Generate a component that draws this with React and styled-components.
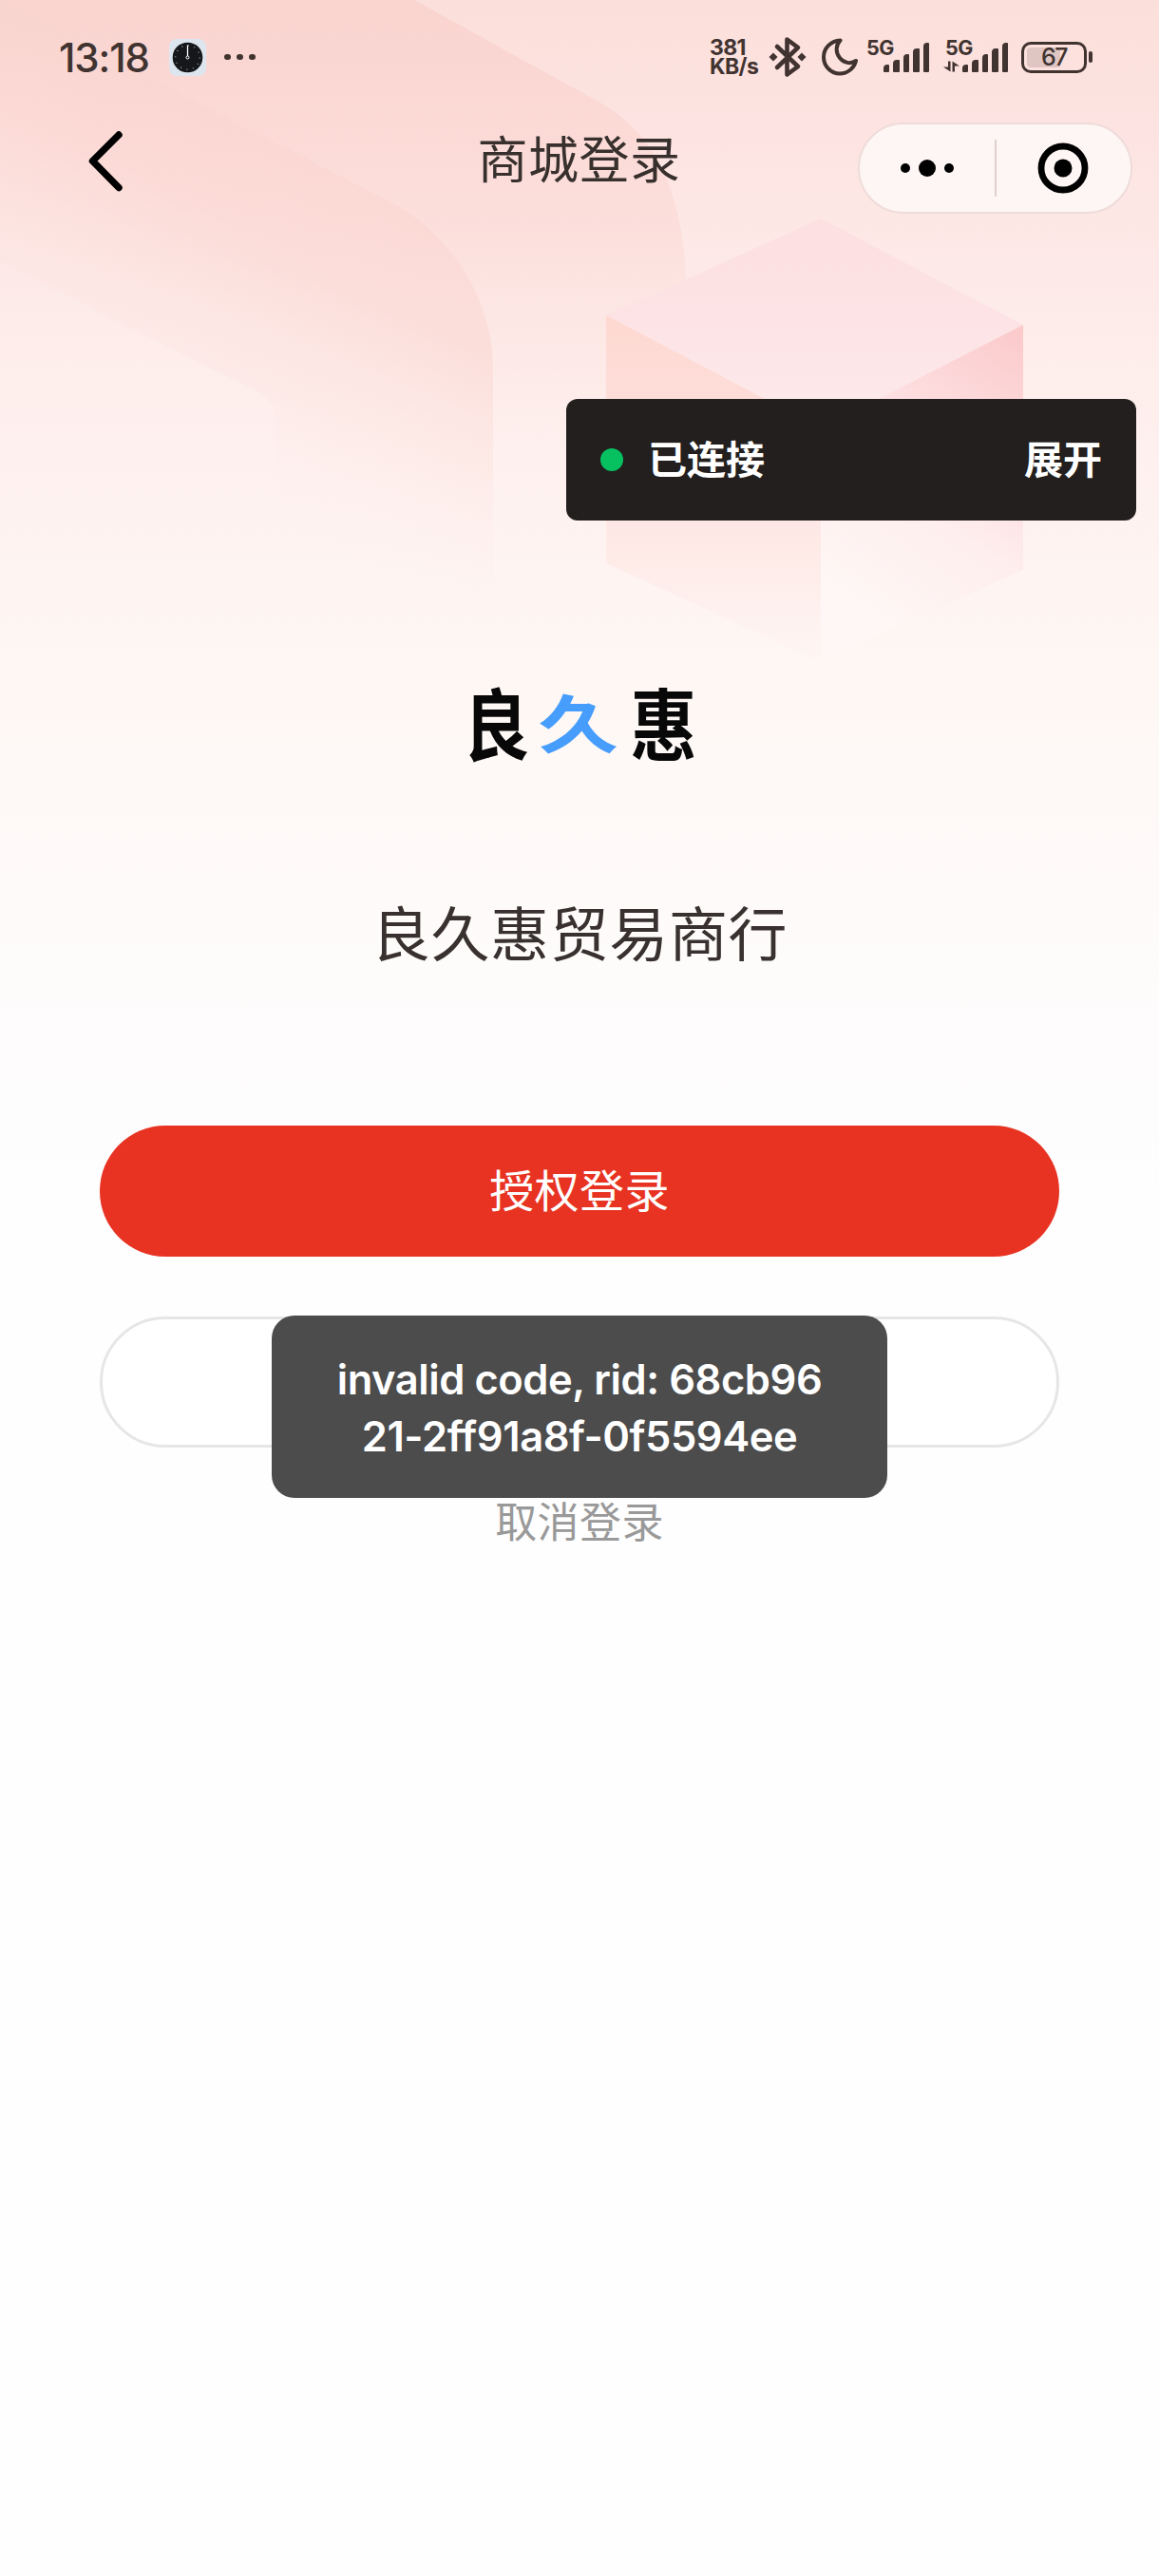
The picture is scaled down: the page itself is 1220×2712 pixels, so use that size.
import styled, { createGlobalStyle } from 'styled-components';

const signalBars = [8, 13, 19, 25, 31];

const App = () => {
  return (
    <>
      <GlobalStyle />
      <Page>
        <Backdrop />

        <StatusBar>
          <Clock>13:18</Clock>
          <ClockIcon />
          <MoreDots>
            <i />
            <i />
            <i />
          </MoreDots>
          <StatusRight>
            <NetSpeed>
              <span>381</span>
              <span>KB/s</span>
            </NetSpeed>
            <BluetoothIcon />
            <MoonIcon />
            <Signal />
            <Signal active />
            <Battery>
              <BatteryBody>
                <span>67</span>
              </BatteryBody>
              <BatteryCap />
            </Battery>
          </StatusRight>
        </StatusBar>

        <NavBar>
          <BackButton aria-label="返回">
            <svg width="42" height="68" viewBox="0 0 42 68" fill="none">
              <path d="M36 6 L8.5 33.5 L36 61.5" stroke="#000" strokeWidth="7.4" strokeLinecap="round" strokeLinejoin="round" />
            </svg>
          </BackButton>
          <NavTitle>商城登录</NavTitle>
          <Capsule>
            <CapsuleHalf>
              <svg width="58" height="20" viewBox="0 0 58 20">
                <circle cx="6" cy="10" r="5" />
                <circle cx="29" cy="10" r="9" />
                <circle cx="52" cy="10" r="5" />
              </svg>
            </CapsuleHalf>
            <CapsuleDivider />
            <CapsuleHalf>
              <svg width="54" height="54" viewBox="0 0 54 54">
                <circle cx="27" cy="27" r="23" fill="none" stroke="#000" strokeWidth="6.8" />
                <circle cx="27" cy="27" r="9.5" />
              </svg>
            </CapsuleHalf>
          </Capsule>
        </NavBar>

        <Content>
          <Logo>
            <LogoChar>良</LogoChar>
            <LogoChar $accent>久</LogoChar>
            <LogoChar>惠</LogoChar>
          </Logo>
          <ShopName>良久惠贸易商行</ShopName>
          <PrimaryButton>授权登录</PrimaryButton>
          <OutlineButton />
          <CancelLink>取消登录</CancelLink>
        </Content>

        <DebugPanel>
          <StatusDot />
          <PanelText>已连接</PanelText>
          <Expand>展开</Expand>
        </DebugPanel>

        <Toast>
          invalid code, rid: 68cb96
          <br />
          21-2ff91a8f-0f5594ee
        </Toast>
      </Page>
    </>
  );
};

const Backdrop = () => (
  <BackdropSvg width="1220" height="1260" viewBox="0 0 1220 1260">
    <defs>
      <linearGradient id="base" x1="0" y1="0" x2="0" y2="1">
        <stop offset="0" stopColor="#fbdfda" />
        <stop offset="0.12" stopColor="#fde4e2" />
        <stop offset="0.25" stopColor="#fdebe9" />
        <stop offset="0.4" stopColor="#fef1ef" />
        <stop offset="0.56" stopColor="#fef7f4" />
        <stop offset="0.8" stopColor="#fefbfb" />
        <stop offset="1" stopColor="#fefefe" />
      </linearGradient>
      <linearGradient id="band" gradientUnits="userSpaceOnUse" x1="450" y1="100" x2="230" y2="520">
        <stop offset="0" stopColor="#f7c6c0" stopOpacity="0.5" />
        <stop offset="0.45" stopColor="#f9cbc5" stopOpacity="0.42" />
        <stop offset="0.7" stopColor="#fad6cf" stopOpacity="0.2" />
        <stop offset="0.88" stopColor="#fbdcd6" stopOpacity="0.04" />
        <stop offset="1" stopColor="#fbe0da" stopOpacity="0" />
      </linearGradient>
      <linearGradient id="bandBack" gradientUnits="userSpaceOnUse" x1="0" y1="0" x2="0" y2="480">
        <stop offset="0" stopColor="#f8c8c4" stopOpacity="0.5" />
        <stop offset="0.5" stopColor="#fad2cc" stopOpacity="0.4" />
        <stop offset="1" stopColor="#fbe0da" stopOpacity="0" />
      </linearGradient>
      <linearGradient id="cubeTop" x1="0" y1="0" x2="0" y2="1">
        <stop offset="0" stopColor="#fde0e0" />
        <stop offset="0.5" stopColor="#fde3e5" />
        <stop offset="1" stopColor="#fdebeb" />
      </linearGradient>
      <linearGradient id="cubeLeft" x1="0" y1="0" x2="0" y2="1">
        <stop offset="0" stopColor="#fed8d1" />
        <stop offset="0.35" stopColor="#fddfdc" />
        <stop offset="0.7" stopColor="#feebe8" />
        <stop offset="1" stopColor="#fef6f4" />
      </linearGradient>
      <linearGradient id="cubeRight" x1="1" y1="0" x2="0.6" y2="1">
        <stop offset="0" stopColor="#fbc9ca" />
        <stop offset="0.35" stopColor="#fddcde" />
        <stop offset="0.65" stopColor="#feeeee" />
        <stop offset="1" stopColor="#fef7f5" />
      </linearGradient>
    </defs>
    <rect width="1220" height="1260" fill="url(#base)" />
    <path d="M0 0 H436 L630 107 C688 139 718 200 722 290 V480 H519 V390 C519 310 470 243 412 213 L0 0Z" fill="url(#bandBack)" />
    <path d="M0 0 L412 213 C470 243 519 310 519 390 V680 H290 V445 C290 425 284 420 266 410 L0 276Z" fill="url(#band)" />
    <path d="M864 230 L1077 342 L864 451 L638 332Z" fill="url(#cubeTop)" />
    <path d="M638 332 L864 451 V697 L638 593Z" fill="url(#cubeLeft)" />
    <path d="M1077 342 L864 451 V697 L1077 600Z" fill="url(#cubeRight)" />
  </BackdropSvg>
);

const ClockIcon = () => (
  <svg width="39" height="39" viewBox="0 0 39 39">
    <rect width="39" height="39" rx="8" fill="#dde6ee" />
    <circle cx="19.5" cy="19.5" r="15.8" fill="#15171a" />
    <circle cx="19.5" cy="19.5" r="12.8" fill="none" stroke="#8d9093" strokeWidth="1.6" strokeDasharray="1 5.7" />
    <path d="M19.5 6.5 V18" stroke="#fff" strokeWidth="1.3" />
    <circle cx="19.5" cy="19.5" r="1.5" fill="none" stroke="#fff" strokeWidth="1" />
  </svg>
);

const BluetoothIcon = () => (
  <BluetoothSvg width="40" height="44" viewBox="0 0 40 44" fill="none">
    <path d="M9 11 L31 32 L19.5 40.5 V3.5 L31 12 L9 33" stroke="#413330" strokeWidth="4.6" strokeLinejoin="round" strokeLinecap="round" />
    <path d="M5 17.5 L9.5 22 L5 26.5 L0.5 22Z M35 17.5 L39.5 22 L35 26.5 L30.5 22Z" fill="#413330" />
  </BluetoothSvg>
);

const MoonIcon = () => (
  <MoonSvg width="38" height="40" viewBox="0 0 38 40" fill="none">
    <path d="M19.5 2.5 C9 3 2 11 2 20 C2 30 10 37.5 19 37.5 C27 37.5 34 32 36 24 C30 28 23 26 19 21 C14 15 15 7 19.5 2.5Z" stroke="#413330" strokeWidth="4" strokeLinejoin="round" />
  </MoonSvg>
);

const Signal = ({ active }) => (
  <SignalBox $active={active}>
    <span>5G</span>
    {active && (
      <svg width="17" height="12" viewBox="0 0 17 12">
        <path d="M5 0.5 H7.5 V11.5 L0 6.5 H5Z M9.5 11.5 V0.5 L17 5.5 H12 V11.5Z" fill="#413330" />
      </svg>
    )}
    <Bars>
      {signalBars.map((height) => (
        <Bar key={height} style={{ height }} />
      ))}
    </Bars>
  </SignalBox>
);

const GlobalStyle = createGlobalStyle`
  * {
    box-sizing: border-box;
  }

  body {
    margin: 0;
    background: #fefefe;
    font-family: 'Noto Sans CJK SC', sans-serif;
  }

  button {
    padding: 0;
    border: none;
    background: none;
    font: inherit;
  }

  svg {
    display: block;
    flex: none;
  }
`;

const Page = styled.div`
  position: relative;
  isolation: isolate;
  width: 1220px;
  height: 2712px;
  overflow: hidden;
  background: #fefefe;
`;

const BackdropSvg = styled.svg`
  position: absolute;
  top: 0;
  left: 0;
  z-index: -1;
`;

const StatusBar = styled.div`
  display: flex;
  align-items: center;
  height: 120px;
  padding: 0 70px 0 62px;
  color: #413330;
`;

const Clock = styled.span`
  width: 116px;
  font-family: Inter, sans-serif;
  font-size: 42px;
  font-weight: 500;
  letter-spacing: -1.1px;
`;

const MoreDots = styled.div`
  display: flex;
  gap: 6.5px;
  margin-left: 19px;

  i {
    width: 6.5px;
    height: 6.5px;
    border-radius: 50%;
    background: #413330;
  }
`;

const StatusRight = styled.div`
  display: flex;
  align-items: center;
  margin-left: auto;
`;

const NetSpeed = styled.div`
  display: flex;
  flex-direction: column;
  width: 62px;
  font-family: Inter, sans-serif;
  font-size: 23px;
  font-weight: 700;
  letter-spacing: -0.6px;
  line-height: 20px;
`;

const BluetoothSvg = styled.svg`
  margin-right: 16px;
`;

const MoonSvg = styled.svg`
  margin-right: 8px;
`;

const SignalBox = styled.div`
  position: relative;
  display: flex;
  align-items: flex-end;
  justify-content: flex-end;
  width: ${props => props.$active ? '69px' : '67px'};
  height: 32px;
  margin-right: 14px;

  span {
    position: absolute;
    top: -6px;
    left: ${props => props.$active ? '3px' : '1px'};
    font-family: Inter, sans-serif;
    font-size: 21.5px;
    font-weight: 700;
    letter-spacing: -0.6px;
    line-height: 24px;
  }

  svg {
    margin-right: 3px;
  }
`;

const Bars = styled.div`
  display: flex;
  align-items: flex-end;
  gap: 4px;
`;

const Bar = styled.div`
  width: 6.5px;
  border-radius: 4px 1px 1px 1px;
  background: #413330;
`;

const Battery = styled.div`
  display: flex;
  align-items: center;
  gap: 2px;
`;

const BatteryBody = styled.div`
  display: flex;
  align-items: center;
  justify-content: center;
  width: 69px;
  height: 33px;
  border: 3px solid #413330;
  border-radius: 10px;
  background: linear-gradient(90deg, #dfc6c3 62%, transparent 62%) content-box;
  padding: 3px;

  span {
    font-family: Inter, sans-serif;
    font-size: 25px;
    font-weight: 500;
    letter-spacing: -1.5px;
    line-height: 21px;
  }
`;

const BatteryCap = styled.div`
  width: 4px;
  height: 12px;
  border-radius: 2px;
  background: #413330;
`;

const NavBar = styled.div`
  display: grid;
  grid-template-columns: 316px 1fr 317px;
  height: 114px;
`;

const BackButton = styled.button`
  align-self: start;
  justify-self: start;
  margin: 16px 0 0 89px;
`;

const NavTitle = styled.div`
  margin-top: 9px;
  color: #37302d;
  font-size: 53px;
  letter-spacing: 0.5px;
  line-height: 72px;
  text-align: center;
`;

const Capsule = styled.div`
  display: flex;
  align-items: center;
  width: 289px;
  height: 96px;
  margin-top: 9px;
  border: 2px solid #eedcd9;
  border-radius: 48px;
  background: #fef6f4;
`;

const CapsuleHalf = styled.div`
  display: flex;
  flex: 1;
  justify-content: center;
`;

const CapsuleDivider = styled.div`
  width: 2px;
  height: 60px;
  background: #dfcfcd;
`;

const Content = styled.main`
  display: flex;
  flex-direction: column;
  align-items: center;
  padding-top: 474px;
`;

const Logo = styled.div`
  display: flex;
  gap: 13px;
  height: 100px;
`;

const LogoChar = styled.span`
  width: 75px;
  color: ${props => props.$accent ? '#469dfb' : '#080808'};
  font-size: 73px;
  font-weight: ${props => props.$accent ? 700 : 600};
  line-height: 100px;
  text-align: center;
  transform: ${props => props.$accent ? 'translateX(-2px) scale(1.16, 0.9)' : 'scale(0.96, 1.12)'};
`;

const ShopName = styled.h1`
  margin: 127px 0 0;
  color: #383130;
  font-size: 62px;
  font-weight: 400;
  letter-spacing: 0.6px;
  line-height: 90px;
`;

const PrimaryButton = styled.button`
  width: 1010px;
  height: 138px;
  margin-top: 160px;
  padding-bottom: 7px;
  border-radius: 69px;
  background: #e83323;
  color: #fff;
  font-size: 47px;
  letter-spacing: 0.4px;
`;

const OutlineButton = styled.button`
  width: 1010px;
  height: 138px;
  margin-top: 63px;
  border: 3px solid #e6e6e6;
  border-radius: 69px;
  background: #fff;
`;

const CancelLink = styled.button`
  margin-top: 43px;
  color: #999;
  font-size: 44px;
  letter-spacing: 0.4px;
  line-height: 66px;
`;

const DebugPanel = styled.div`
  position: absolute;
  top: 420px;
  left: 596px;
  display: flex;
  align-items: center;
  width: 600px;
  height: 128px;
  padding: 0 36px;
  border-radius: 12px;
  background: #221f1e;
  color: #fff;
`;

const PanelText = styled.span`
  padding-bottom: 6px;
  font-size: 41px;
  font-weight: 700;
`;

const StatusDot = styled.i`
  width: 24px;
  height: 24px;
  margin-right: 26px;
  border-radius: 50%;
  background: #07c160;
`;

const Expand = styled(PanelText)`
  margin-left: auto;
`;

const Toast = styled.div`
  position: absolute;
  top: 1385px;
  left: 286px;
  width: 648px;
  height: 192px;
  padding-top: 37px;
  border-radius: 24px;
  background: #4c4c4c;
  color: #fff;
  font-family: Inter, sans-serif;
  font-size: 43.5px;
  font-weight: 600;
  letter-spacing: -0.45px;
  line-height: 60px;
  text-align: center;
  white-space: nowrap;
`;

export default App;
